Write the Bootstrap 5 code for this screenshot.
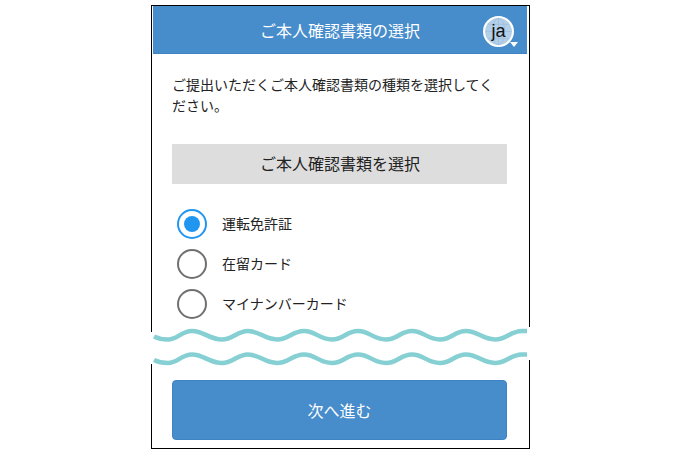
<!DOCTYPE html>
<html lang="ja">
<head>
<meta charset="utf-8">
<title>ご本人確認書類の選択</title>
<link href="https://cdn.jsdelivr.net/npm/bootstrap@5.3.0/dist/css/bootstrap.min.css" rel="stylesheet">
<style>
html, body { background: #fff; height: 458px; overflow: hidden; }
body { font-family: "Noto Sans CJK JP", "Liberation Sans", sans-serif; color: #222; padding: 5px 0 0 151px; }
.phone { width: 379px; }
.phone-top { border: solid #000; border-width: 1px 1px 0; height: 322px; padding: 0 2px 0 1px; }
.phone-bottom { border: solid #000; border-width: 0 1px 1px; height: 85px; padding: 16px 20px 0; }
.app-head { height: 48px; background: #478ccb; border-bottom: 1px solid #3f82bf; color: #fff; font-size: 16px; }
.lang-ball { right: 13px; top: 10px; width: 31px; height: 31px; }
.lang-ball svg { display: block; }
.lang-ball span { color: #111; font-family: "Liberation Sans", sans-serif; font-size: 18px; line-height: 26px; padding-bottom: 2px; }
.lang-tri { right: -4px; bottom: 0; width: 0; height: 0; border: 4px solid transparent; border-top: 5px solid #fff; border-bottom: 0; }
.lead-text { padding: 20px 25px 0 19px; font-size: 14px; line-height: 21px; height: 90px; }
.pick-bar { margin-left: 19px; width: 335px; height: 40px; background: #ddd; font-size: 16px; color: #222; padding: 0 0 2px 1px; }
.pick-list { margin: 25px 0 0 24px; gap: 10px; font-size: 14px; }
.pick-row { height: 30px; gap: 15px; }
.pick-row span:last-child { padding-bottom: 2px; }
.ring { width: 30px; height: 30px; border-radius: 50%; border: 2px solid #707070; flex: none; }
.ring.on { border-color: #2196f0; }
.ring.on::after { content: ""; width: 16px; height: 16px; border-radius: 50%; background: #2196f0; }
.wave-band { height: 37px; }
.wave-band::before, .wave-band::after { content: ""; position: absolute; width: 1px; background: #000; }
.wave-band::before { left: 0; top: 0; height: 5px; }
.wave-band::after { right: 0; bottom: 0; height: 4px; }
.wave-band svg { display: block; margin-left: 3px; overflow: visible; filter: blur(.5px); }
.next-btn { width: 335px; height: 60px; background: #478ccb; border: 1px solid #3f82c4; border-radius: 4px; color: #fff; font-size: 16px; }
.next-btn:hover { background: #478ccb; color: #fff; }
</style>
</head>
<body>
<div class="phone">
  <div class="phone-top">
    <div class="app-head position-relative d-flex align-items-center justify-content-center">
      ご本人確認書類の選択
      <div class="lang-ball position-absolute d-flex align-items-center justify-content-center">
        <svg class="position-absolute top-0 start-0" width="31" height="31" viewBox="0 0 30 30" aria-hidden="true">
          <circle cx="15" cy="15" r="14" fill="#b4cfe8" stroke="#fff" stroke-width="2"/>
          <g fill="none" stroke="#9fbfdd" stroke-width=".8">
            <ellipse cx="15" cy="15" rx="6" ry="13"/>
            <path d="M15 2v26M2.5 15h25M5 8h20M5 22h20"/>
          </g>
        </svg>
        <span class="position-relative">ja</span>
        <div class="lang-tri position-absolute"></div>
      </div>
    </div>
    <p class="lead-text mb-0">ご提出いただくご本人確認書類の種類を選択してください。</p>
    <div class="pick-bar d-flex align-items-center justify-content-center">ご本人確認書類を選択</div>
    <div class="pick-list d-flex flex-column">
      <div class="pick-row d-flex align-items-center"><span class="ring on d-flex align-items-center justify-content-center"></span><span>運転免許証</span></div>
      <div class="pick-row d-flex align-items-center"><span class="ring"></span><span>在留カード</span></div>
      <div class="pick-row d-flex align-items-center"><span class="ring"></span><span>マイナンバーカード</span></div>
    </div>
  </div>
  <div class="wave-band position-relative">
    <svg width="373" height="37" viewBox="154 327 373 37" aria-hidden="true">
      <g fill="none" stroke="#86d0d4" stroke-width="4.5">
        <path d="M154 336.5 C 158 338.5 162 339.5 168 339.5 C 178 339.5 181 331 192 331 C 204 331 209 339.5 222 339.5 C 233 339.5 237 331 248 331 C 260 331 264 339.5 277 339.5 C 289 339.5 292 331 304 331 C 316 331 319 339.5 332 339.5 C 344 339.5 346 331 358 331 C 370 331 373 339.5 386 339.5 C 398 339.5 400 331 412 331 C 424 331 427 339.5 440 339.5 C 452 339.5 454 331 466 331 C 478 331 482 339.5 495 339.5 C 507 339.5 510 331 522 331 L 527 331"/>
        <path transform="translate(0 23.5)" d="M154 336.5 C 158 338.5 162 339.5 168 339.5 C 178 339.5 181 331 192 331 C 204 331 209 339.5 222 339.5 C 233 339.5 237 331 248 331 C 260 331 264 339.5 277 339.5 C 289 339.5 292 331 304 331 C 316 331 319 339.5 332 339.5 C 344 339.5 346 331 358 331 C 370 331 373 339.5 386 339.5 C 398 339.5 400 331 412 331 C 424 331 427 339.5 440 339.5 C 452 339.5 454 331 466 331 C 478 331 482 339.5 495 339.5 C 507 339.5 510 331 522 331 L 527 331"/>
      </g>
    </svg>
  </div>
  <div class="phone-bottom">
    <button type="button" class="btn next-btn d-flex align-items-center justify-content-center p-0">次へ進む</button>
  </div>
</div>
<script src="https://cdn.jsdelivr.net/npm/bootstrap@5.3.0/dist/js/bootstrap.bundle.min.js"></script>
</body>
</html>
